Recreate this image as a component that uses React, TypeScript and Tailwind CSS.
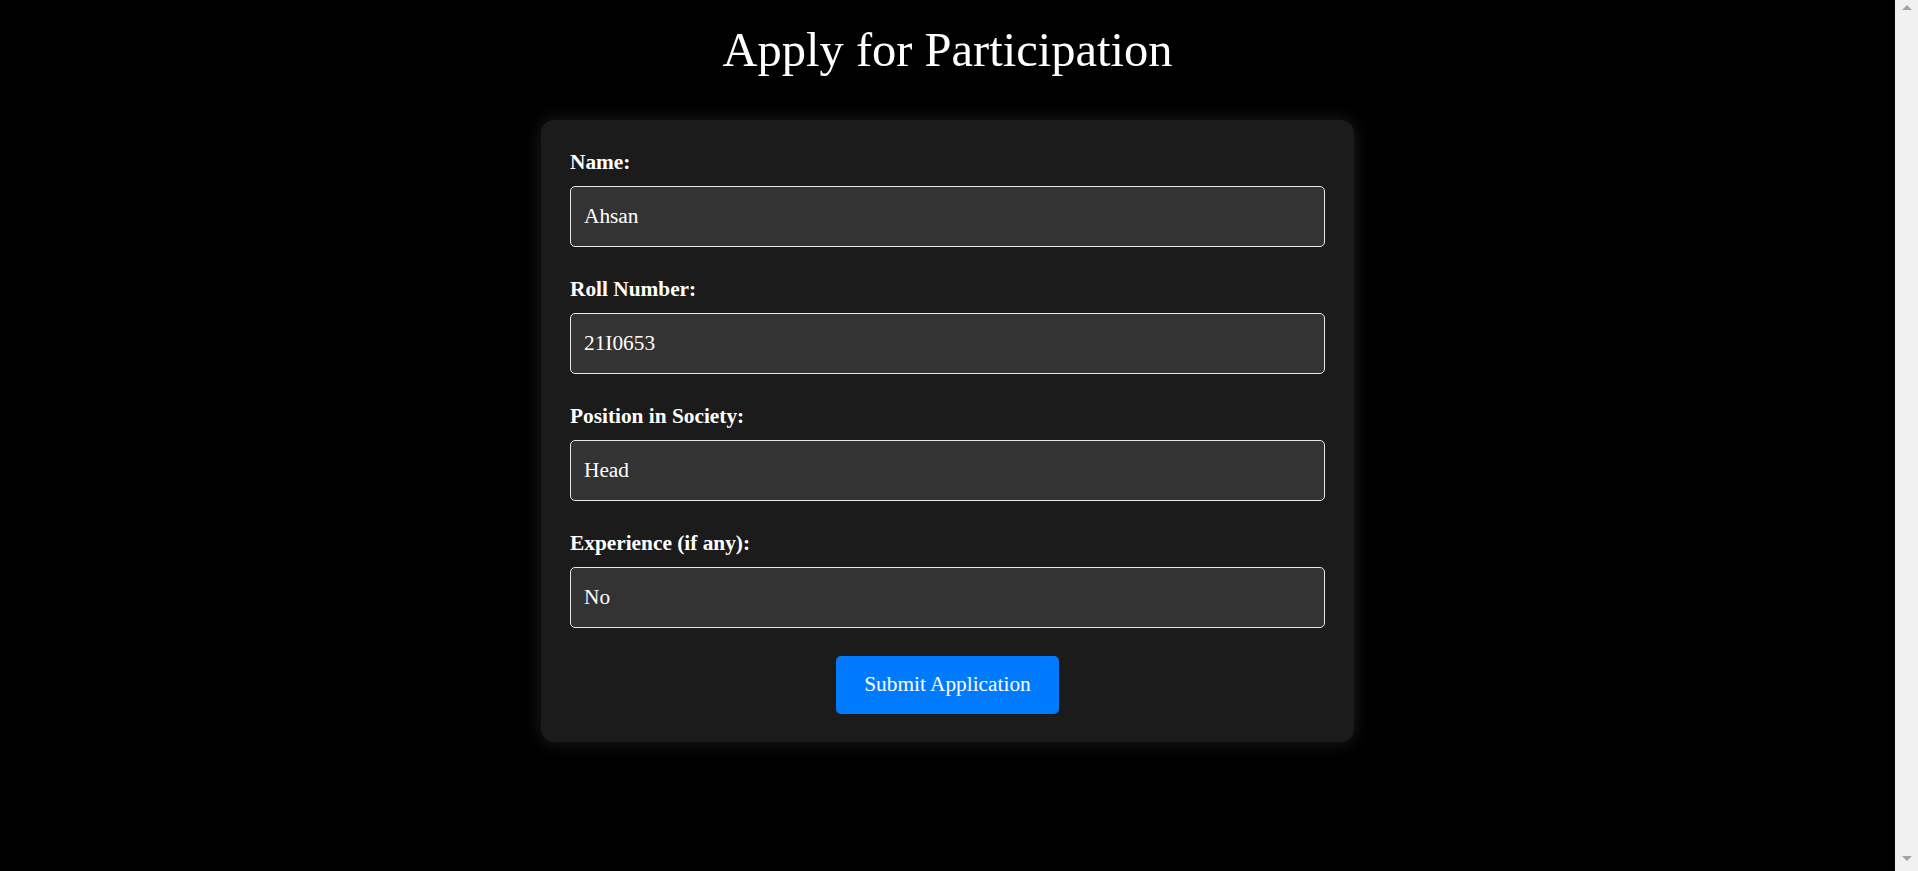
import { useState } from 'react'

type Field = { id: string; label: string; value: string }

const FIELDS: Field[] = [
  { id: 'name', label: 'Name:', value: 'Ahsan' },
  { id: 'roll', label: 'Roll Number:', value: '21I0653' },
  { id: 'position', label: 'Position in Society:', value: 'Head' },
  { id: 'experience', label: 'Experience (if any):', value: 'No' },
]

// the capture shows a classic, disabled scrollbar strip on the right
function ScrollStrip() {
  return (
    <div className="flex w-[23px] flex-none flex-col justify-between bg-[#f1f1f1] pb-[9px] pt-[4px]">
      <svg width="23" height="6" viewBox="0 0 23 6" className="block">
        <path d="M7 6 L12 1 L17 6 Z" fill="#a3a3a3" />
      </svg>
      <svg width="23" height="6" viewBox="0 0 23 6" className="block">
        <path d="M7 0 L17 0 L12 5 Z" fill="#a3a3a3" />
      </svg>
    </div>
  )
}

export default function App() {
  const [values, setValues] = useState<Record<string, string>>(
    Object.fromEntries(FIELDS.map((f) => [f.id, f.value])),
  )

  return (
    <div className="flex h-screen bg-black font-['Liberation_Serif','Times_New_Roman',serif] text-white">
      <main className="min-w-0 flex-1">
        <h1 className="pt-[23px] text-center text-[48.5px] font-normal leading-[53px]">Apply for Participation</h1>

        <form
          onSubmit={(e) => e.preventDefault()}
          className="mx-auto mt-[44px] w-[813px] rounded-[13px] bg-[#1b1b1b] px-[29px] pb-[28px] pt-[30px] shadow-[0_0_18px_rgba(255,255,255,0.12)]"
        >
          {FIELDS.map((f, i) => (
            <div key={f.id} className={i < FIELDS.length - 1 ? 'mb-[30px]' : ''}>
              <label htmlFor={f.id} className="mb-[11px] block text-[21.33px] font-bold leading-[25px]">
                {f.label}
              </label>
              <input
                id={f.id}
                value={values[f.id]}
                onChange={(e) => setValues({ ...values, [f.id]: e.target.value })}
                className="block h-[61px] w-full rounded-[5px] border border-[#e6e6e6] bg-[#333333] px-[13px] text-[21.33px] text-white outline-none"
              />
            </div>
          ))}

          <div className="mt-[28px] flex justify-center">
            <button
              type="submit"
              className="h-[58px] w-[223px] rounded-[5px] bg-[#007bff] text-[21.33px] text-white"
            >
              Submit Application
            </button>
          </div>
        </form>
      </main>
      <ScrollStrip />
    </div>
  )
}
